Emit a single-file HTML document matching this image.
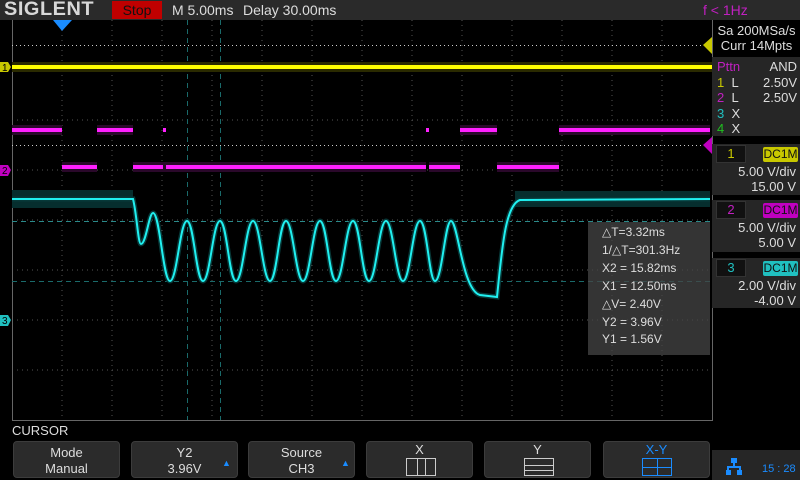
<!DOCTYPE html>
<html><head><meta charset="utf-8"><style>
*{margin:0;padding:0;box-sizing:border-box}
body{width:800px;height:480px;background:#000;overflow:hidden;position:relative;font-family:"Liberation Sans",sans-serif;color:#ddd}
.a{position:absolute}
.top{left:0;top:0;width:800px;height:20px;background:#2a2a2a}
.logo{left:4px;top:0px;font-size:19px;font-weight:bold;color:#d8d8d8;letter-spacing:0.5px;line-height:20px;transform:scaleX(1.05);transform-origin:left}
.stop{left:112px;top:1px;width:50px;height:18px;background:#c00000;color:#111;font-size:14px;text-align:center;line-height:18px}
.t14{font-size:14px;line-height:20px;color:#ddd}
.rp{font-size:12px;line-height:15px}
.btn{top:441px;height:37px;width:107px;background:#2b2b2b;border:1px solid #3c3c3c;border-radius:4px;font-size:13px;text-align:center;line-height:16px;padding-top:3px;color:#ddd}
.chb{left:712px;width:88px;background:#262626}
.tag{font-size:12px;line-height:15px;text-align:center;color:#111}
</style></head><body>
<div class="a top"></div>
<div class="a logo">SIGLENT</div>
<div class="a stop">Stop</div>
<div class="a t14" style="left:172px;top:0">M 5.00ms</div>
<div class="a t14" style="left:243px;top:0">Delay 30.00ms</div>
<div class="a t14" style="left:703px;top:0;color:#c020c0">f &lt; 1Hz</div>

<svg class="a" style="left:0;top:0" width="800" height="480">
<g stroke="#555" stroke-width="1" stroke-dasharray="1,4">
<line x1="62" y1="20" x2="62" y2="420"/><line x1="112" y1="20" x2="112" y2="420"/><line x1="162" y1="20" x2="162" y2="420"/><line x1="212" y1="20" x2="212" y2="420"/><line x1="262" y1="20" x2="262" y2="420"/><line x1="312" y1="20" x2="312" y2="420"/><line x1="362" y1="20" x2="362" y2="420"/><line x1="412" y1="20" x2="412" y2="420"/><line x1="462" y1="20" x2="462" y2="420"/><line x1="512" y1="20" x2="512" y2="420"/><line x1="562" y1="20" x2="562" y2="420"/><line x1="612" y1="20" x2="612" y2="420"/><line x1="662" y1="20" x2="662" y2="420"/>
<line x1="12" y1="70" x2="712" y2="70"/><line x1="12" y1="120" x2="712" y2="120"/><line x1="12" y1="170" x2="712" y2="170"/><line x1="12" y1="220" x2="712" y2="220"/><line x1="12" y1="270" x2="712" y2="270"/><line x1="12" y1="320" x2="712" y2="320"/><line x1="12" y1="370" x2="712" y2="370"/>
</g>
<line x1="12.5" y1="20" x2="12.5" y2="420" stroke="#666"/>
<path d="M12,420.5 H712.5 V20" stroke="#666" fill="none"/>
<line x1="12" y1="45.5" x2="712" y2="45.5" stroke="#ccc" stroke-dasharray="1,3"/>
<line x1="12" y1="145.5" x2="712" y2="145.5" stroke="#ccc" stroke-dasharray="1,3"/>
<g stroke="#1a6a6a" stroke-dasharray="5,4">
<line x1="187.5" y1="20" x2="187.5" y2="420"/><line x1="220.5" y1="20" x2="220.5" y2="420"/>
<line x1="12" y1="281.5" x2="712" y2="281.5"/>
</g>
<line x1="12" y1="221.5" x2="712" y2="221.5" stroke="#2a8a8a" stroke-dasharray="5,4"/>
<path d="M53,20 L72,20 L62,31 Z" fill="#1a8cff"/>
<rect x="12" y="62" width="700" height="10" fill="#2a2a00"/>
<rect x="12" y="65" width="700" height="4" fill="#ffff00"/>
<g fill="#2a082a"><rect x="12" y="125" width="50" height="10"/><rect x="97" y="125" width="36" height="10"/><rect x="559" y="125" width="151" height="10"/><rect x="460" y="125" width="37" height="10"/><rect x="62" y="162" width="35" height="10"/><rect x="133" y="162" width="293" height="10"/><rect x="429" y="162" width="31" height="10"/><rect x="497" y="162" width="62" height="10"/></g>
<g fill="#ff20ff">
<rect x="12" y="128" width="50" height="4"/><rect x="62" y="165" width="35" height="4"/><rect x="97" y="128" width="36" height="4"/><rect x="133" y="165" width="30" height="4"/><rect x="163" y="128" width="3" height="4"/><rect x="166" y="165" width="260" height="4"/><rect x="426" y="128" width="3" height="4"/><rect x="429" y="165" width="31" height="4"/><rect x="460" y="128" width="37" height="4"/><rect x="497" y="165" width="62" height="4"/><rect x="559" y="128" width="151" height="4"/>
</g>
<rect x="12" y="190" width="121" height="18" fill="#062e2e"/>
<rect x="515" y="191" width="195" height="16" fill="#062e2e"/>
<path d="M12,199 H133 C137,215 138,244 141,244 C146,244 149,213 153,213 C160,213 163,281 170,281 C177,281 180,221 187,221 C194,221 196,281 203,281 C210,281 213,221 220,221 C227,221 229,281 236,281 C243,281 246,221 253,221 C260,221 263,281 270,281 C277,281 279,221 286,221 C293,221 296,281 303,281 C310,281 313,221 320,221 C327,221 329,281 336,281 C343,281 346,221 353,221 C360,221 362,281 369,281 C376,281 379,221 386,221 C393,221 396,281 403,281 C410,281 413,221 420,221 C427,221 429,281 435,281 C442,281 445,221 451,221 C458,221 462,290 480,295 L497,297 C502,250 505,205 520,200 L710,199" fill="none" stroke="#073838" stroke-width="5"/>
<path d="M12,199 H133 C137,215 138,244 141,244 C146,244 149,213 153,213 C160,213 163,281 170,281 C177,281 180,221 187,221 C194,221 196,281 203,281 C210,281 213,221 220,221 C227,221 229,281 236,281 C243,281 246,221 253,221 C260,221 263,281 270,281 C277,281 279,221 286,221 C293,221 296,281 303,281 C310,281 313,221 320,221 C327,221 329,281 336,281 C343,281 346,221 353,221 C360,221 362,281 369,281 C376,281 379,221 386,221 C393,221 396,281 403,281 C410,281 413,221 420,221 C427,221 429,281 435,281 C442,281 445,221 451,221 C458,221 462,290 480,295 L497,297 C502,250 505,205 520,200 L710,199" fill="none" stroke="#20f0f0" stroke-width="2"/>
<path d="M0,62 H8 L11,67 L8,72 H0 Z" fill="#c8c800"/><text x="2" y="71" font-size="10" fill="#000" font-family="Liberation Sans">1</text>
<path d="M0,165 H8 L11,170 L8,176 H0 Z" fill="#c000c0"/><text x="2" y="174" font-size="10" fill="#000" font-family="Liberation Sans">2</text>
<path d="M0,315 H8 L11,320 L8,326 H0 Z" fill="#20c0c0"/><text x="2" y="324" font-size="10" fill="#000" font-family="Liberation Sans">3</text>
<path d="M712,37 V54 L703,45 Z" fill="#c8c800"/>
<path d="M712,137 V154 L703,145 Z" fill="#c000c0"/>
</svg>

<div class="a" style="left:588px;top:222px;width:122px;height:133px;background:rgba(70,70,70,0.75)"></div>
<div class="a" style="left:602px;top:224px;font-size:12px;line-height:17.9px;color:#ddd">△T=3.32ms<br>1/△T=301.3Hz<br>X2 = 15.82ms<br>X1 = 12.50ms<br>△V= 2.40V<br>Y2 = 3.96V<br>Y1 = 1.56V</div>

<div class="a rp" style="left:712px;top:20px;width:88px;height:36px;border-left:1px solid #666;text-align:center;padding-top:3px;font-size:13px;line-height:15px">Sa 200MSa/s<br>Curr 14Mpts</div>
<div class="a" style="left:712px;top:57px;width:88px;height:79px;background:#262626"></div>
<div class="a rp" style="left:717px;top:59px;font-size:13px;line-height:15.5px"><span style="color:#c020c0">Pttn</span><br><span style="color:#c8c800">1</span>&nbsp; L<br><span style="color:#c020c0">2</span>&nbsp; L<br><span style="color:#20c0c0">3</span>&nbsp; X<br><span style="color:#20c020">4</span>&nbsp; X</div>
<div class="a rp" style="left:752px;top:59px;width:45px;text-align:right;font-size:13px;line-height:15.5px">AND<br>2.50V<br>2.50V</div>

<div class="a chb" style="top:144px;height:51px"></div>
<div class="a" style="left:716px;top:145px;width:30px;height:18px;background:#111;border:1px solid #333;color:#c8c800;font-size:13px;text-align:center;line-height:16px">1</div>
<div class="a tag" style="left:763px;top:147px;width:35px;background:#c8c800;border-radius:2px">DC1M</div>
<div class="a rp" style="left:712px;top:164px;width:84px;text-align:right;font-size:13px">5.00 V/div<br>15.00 V</div>

<div class="a chb" style="top:200px;height:52px"></div>
<div class="a" style="left:716px;top:201px;width:30px;height:18px;background:#111;border:1px solid #333;color:#c020c0;font-size:13px;text-align:center;line-height:16px">2</div>
<div class="a tag" style="left:763px;top:203px;width:35px;background:#c000c0;border-radius:2px">DC1M</div>
<div class="a rp" style="left:712px;top:220px;width:84px;text-align:right;font-size:13px">5.00 V/div<br>5.00 V</div>

<div class="a chb" style="top:258px;height:50px"></div>
<div class="a" style="left:716px;top:259px;width:30px;height:18px;background:#111;border:1px solid #333;color:#20c0c0;font-size:13px;text-align:center;line-height:16px">3</div>
<div class="a tag" style="left:763px;top:261px;width:35px;background:#20c0c0;border-radius:2px">DC1M</div>
<div class="a rp" style="left:712px;top:278px;width:84px;text-align:right;font-size:13px">2.00 V/div<br>-4.00 V</div>

<div class="a" style="left:12px;top:423px;font-size:13px;color:#ddd">CURSOR</div>
<div class="a btn" style="left:13px">Mode<br>Manual</div>
<div class="a btn" style="left:131px">Y2<br>3.96V</div>
<div class="a" style="left:222px;top:458px;color:#1a8cff;font-size:9px">▲</div>
<div class="a btn" style="left:248px">Source<br>CH3</div>
<div class="a" style="left:341px;top:458px;color:#1a8cff;font-size:9px">▲</div>
<div class="a btn" style="left:366px;padding-top:0">X</div>
<div class="a" style="left:406px;top:458px;width:30px;height:18px;border:1px solid #ccc;background:linear-gradient(90deg,transparent 10px,#ccc 10px,#ccc 11px,transparent 11px,transparent 18px,#ccc 18px,#ccc 19px,transparent 19px)"></div>
<div class="a btn" style="left:484px;padding-top:0">Y</div>
<div class="a" style="left:524px;top:458px;width:30px;height:18px;border:1px solid #ccc;background:linear-gradient(180deg,transparent 6px,#ccc 6px,#ccc 7px,transparent 7px,transparent 11px,#ccc 11px,#ccc 12px,transparent 12px)"></div>
<div class="a btn" style="left:603px;padding-top:0;color:#1a8cff">X-Y</div>
<div class="a" style="left:642px;top:458px;width:30px;height:18px;border:1px solid #1a8cff;background:linear-gradient(90deg,transparent 14px,#1a8cff 14px,#1a8cff 15px,transparent 15px),linear-gradient(180deg,transparent 8px,#1a8cff 8px,#1a8cff 9px,transparent 9px)"></div>
<div class="a" style="left:712px;top:450px;width:88px;height:30px;background:#262626"></div>
<svg class="a" style="left:726px;top:458px" width="16" height="18"><g fill="#1a8cff"><rect x="5" y="0" width="6" height="5"/><rect x="7" y="5" width="2" height="4"/><rect x="1" y="8" width="14" height="2"/><rect x="1" y="10" width="2" height="3"/><rect x="13" y="10" width="2" height="3"/><rect x="0" y="12" width="5" height="5"/><rect x="11" y="12" width="5" height="5"/></g></svg>
<div class="a" style="left:762px;top:463px;font-size:11px;color:#1a8cff">15 : 28</div>
</body></html>
